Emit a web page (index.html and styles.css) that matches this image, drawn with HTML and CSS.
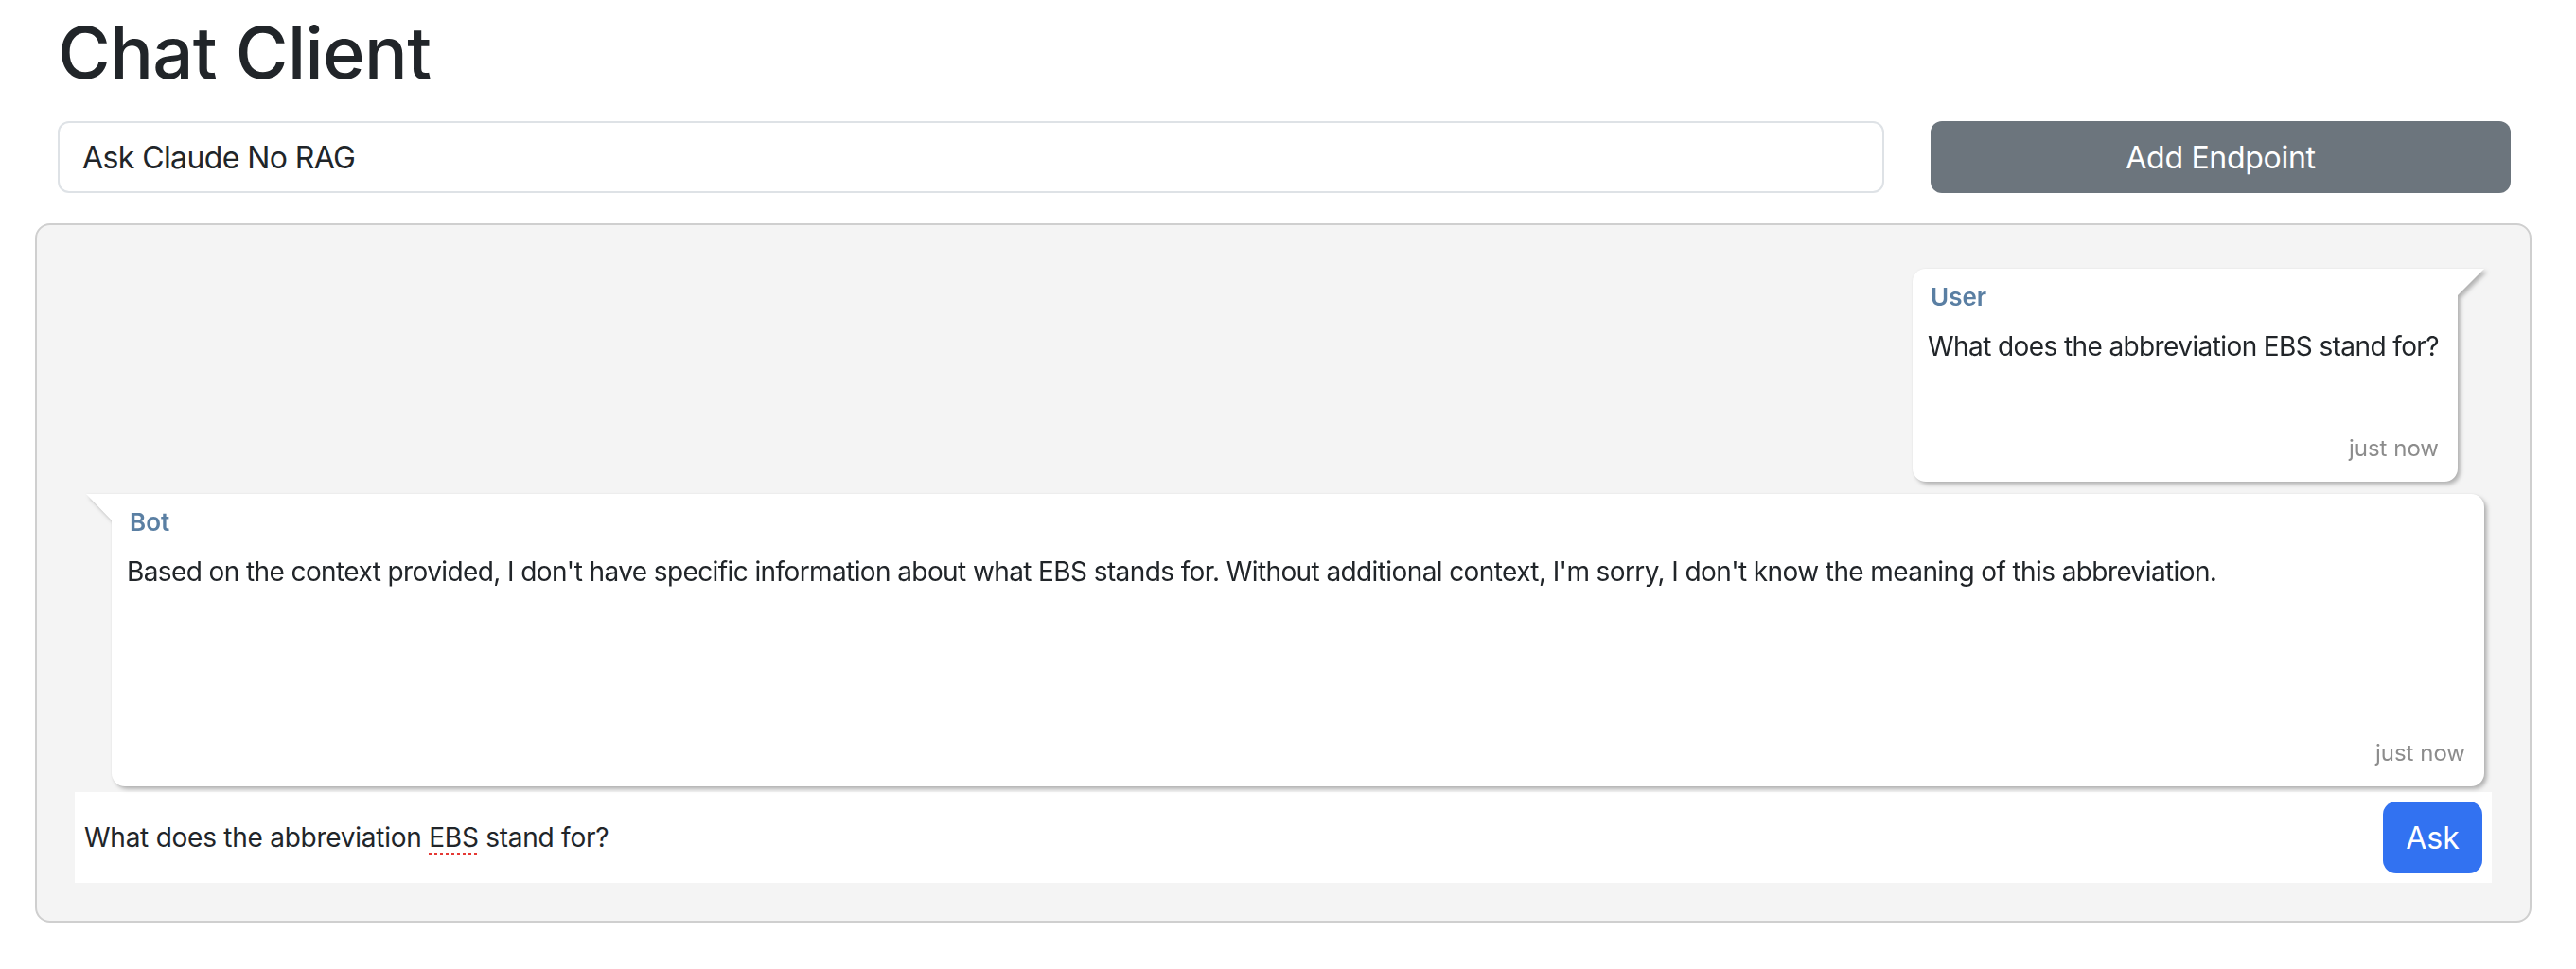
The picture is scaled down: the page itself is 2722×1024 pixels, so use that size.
FILE: index.html
```html
<!DOCTYPE html>
<html lang="en">
<head>
<meta charset="utf-8">
<title>Chat Client</title>
<link rel="stylesheet" href="styles.css">
</head>
<body>
<div class="app">
  <header class="header">
    <h1 class="title">Chat Client</h1>
    <div class="endpoint-row">
      <input class="endpoint-input" type="text" value="Ask Claude No RAG">
      <button class="btn btn-secondary" type="button">Add Endpoint</button>
    </div>
  </header>

  <section class="chat-panel">
    <div class="messages">
      <div class="msg msg-user">
        <div class="msg-sender">User</div>
        <div class="msg-text">What does the abbreviation EBS stand for?</div>
        <div class="msg-time">just now</div>
      </div>
      <div class="msg msg-bot">
        <div class="msg-sender">Bot</div>
        <div class="msg-text msg-text-tall">Based on the context provided, I don't have specific information about what EBS stands for. Without additional context, I'm sorry, I don't know the meaning of this abbreviation.</div>
        <div class="msg-time">just now</div>
      </div>
    </div>
    <div class="ask-row">
      <div class="ask-input" role="textbox">What does the abbreviation <span class="spell">EBS</span> stand for?</div>
      <button class="btn btn-primary" type="button">Ask</button>
    </div>
  </section>
</div>
</body>
</html>
```

FILE: styles.css
```css
* {
  box-sizing: border-box;
}

html, body {
  margin: 0;
  padding: 0;
  background: #ffffff;
}

body {
  font-family: "Inter", "Noto Sans", "Liberation Sans", sans-serif;
  color: #212529;
}

.app {
  padding: 0 47px 40px 37px;
}

.header {
  padding: 0 22px 0 24px;
}

.title {
  margin: 10px 0 27px 0;
  font-size: 76px;
  line-height: 1.2;
  font-weight: 500;
  letter-spacing: -0.6px;
  color: #212529;
}

.endpoint-row {
  display: flex;
  gap: 49px;
  align-items: stretch;
}

.endpoint-input {
  flex: 1;
  height: 76px;
  border: 2px solid #dee2e6;
  border-radius: 12px;
  padding: 0 24px;
  font-family: inherit;
  font-size: 32px;
  letter-spacing: -0.6px;
  color: #212529;
  background: #fff;
  outline: none;
}

.btn {
  border: none;
  font-family: inherit;
  color: #ffffff;
  cursor: pointer;
}

.btn-secondary {
  width: 613px;
  height: 76px;
  background: #6c757d;
  border-radius: 12px;
  font-size: 32px;
  letter-spacing: -0.3px;
}

.chat-panel {
  margin-top: 32px;
  background: #f4f4f4;
  border: 2px solid #cfcfcf;
  border-radius: 16px;
  padding: 40px;
}

.messages {
  display: flex;
  flex-direction: column;
  gap: 13px;
  padding: 6px 8px 6px 12px;
}

.msg {
  position: relative;
  background: #ffffff;
  border-radius: 14px;
  padding: 10px 20px 17px 16px;
  filter: drop-shadow(3px 3px 2px rgba(0, 0, 0, 0.25)) drop-shadow(0 0 1px rgba(0, 0, 0, 0.06));
}

.msg::before {
  content: "";
  position: absolute;
  top: 0;
  width: 0;
  height: 0;
  border-top: 28px solid #ffffff;
}

.msg-user {
  align-self: flex-end;
  margin-right: 28px;
  border-top-right-radius: 0;
}

.msg-user::before {
  right: -28px;
  border-right: 28px solid transparent;
}

.msg-bot {
  margin-left: 27px;
  border-top-left-radius: 0;
}

.msg-bot::before {
  left: -27px;
  border-left: 27px solid transparent;
}

.msg-sender {
  font-size: 26px;
  line-height: 39px;
  font-weight: 600;
  color: #5a7fa3;
  padding-left: 3px;
}

.msg-text {
  margin: 12px 0 69px 0;
  font-size: 28px;
  line-height: 42px;
  letter-spacing: -0.6px;
  color: #212529;
}

.msg-text-tall {
  min-height: 126px;
}

.msg-time {
  font-size: 24px;
  line-height: 36px;
  text-align: right;
  color: #8c8c8c;
}

.ask-row {
  display: flex;
  align-items: center;
  height: 96px;
  padding: 10px;
  background: #ffffff;
}

.ask-input {
  flex: 1;
  font-size: 28px;
  line-height: 42px;
  letter-spacing: -0.25px;
  color: #212529;
}

.spell {
  text-decoration: underline dotted #e53935;
  text-decoration-thickness: 3px;
  text-underline-offset: 6px;
}

.btn-primary {
  width: 105px;
  height: 76px;
  background: #3272f1;
  border-radius: 14px;
  font-size: 32px;
}
```
